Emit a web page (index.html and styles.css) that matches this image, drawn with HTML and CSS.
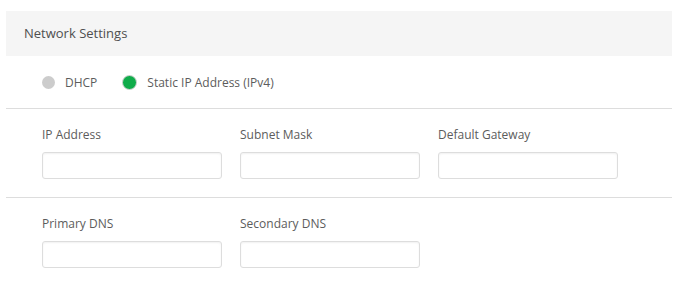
FILE: index.html
```html
<!DOCTYPE html>
<html>

<head>
    <title>Network Settings</title>
    <link rel="stylesheet" href="styles.css">
</head>

<body>
    <div class="panel">
        <div class="panel-header">Network Settings</div>
        <div class="mode-row">
            <label class="radio">
                <span class="dot"></span>
                <span>DHCP</span>
            </label>
            <label class="radio">
                <span class="dot checked"></span>
                <span>Static IP Address (IPv4)</span>
            </label>
        </div>
        <div class="fields">
            <div class="field">
                <label>IP Address</label>
                <input type="text">
            </div>
            <div class="field">
                <label>Subnet Mask</label>
                <input type="text">
            </div>
            <div class="field">
                <label>Default Gateway</label>
                <input type="text">
            </div>
        </div>
        <div class="fields">
            <div class="field">
                <label>Primary DNS</label>
                <input type="text">
            </div>
            <div class="field">
                <label>Secondary DNS</label>
                <input type="text">
            </div>
        </div>
    </div>
</body>

</html>
```

FILE: styles.css
```css
body {
    font-family: "Open Sans", Arial, sans-serif;
    color: #5c5c5c;
    background-color: #fff;
    margin: 0;
    padding: 11px 0 0 6px;
}

.panel {
    width: 666px;
}

.panel-header {
    background-color: #f5f5f5;
    height: 45px;
    line-height: 45px;
    padding-left: 18px;
    font-size: 13px;
    color: #4f4f4f;
}

.mode-row {
    display: flex;
    align-items: center;
    gap: 25px;
    height: 52px;
    padding-left: 36px;
    border-bottom: 1px solid #ddd;
    font-size: 12px;
}

.radio {
    display: flex;
    align-items: center;
    gap: 10px;
}

.dot {
    flex-shrink: 0;
    width: 13px;
    height: 13px;
    border-radius: 50%;
    background-color: #ccc;
}

.dot.checked {
    width: 13px;
    height: 13px;
    background-color: #0fac4a;
    border: 1px solid #d2d2d2;
}

.fields {
    display: flex;
    gap: 18px;
    padding: 18px 0 18px 36px;
    border-bottom: 1px solid #ddd;
}

.fields:last-child {
    border-bottom: none;
}

.field {
    display: flex;
    flex-direction: column;
    gap: 9px;
    width: 180px;
}

.field label {
    font-size: 12px;
    line-height: 16px;
}

.field input {
    box-sizing: border-box;
    width: 180px;
    height: 27px;
    border: 1px solid #ddd;
    border-radius: 3px;
    box-shadow: inset 0 1px 2px rgba(0, 0, 0, 0.06);
    margin: 0;
}
```
